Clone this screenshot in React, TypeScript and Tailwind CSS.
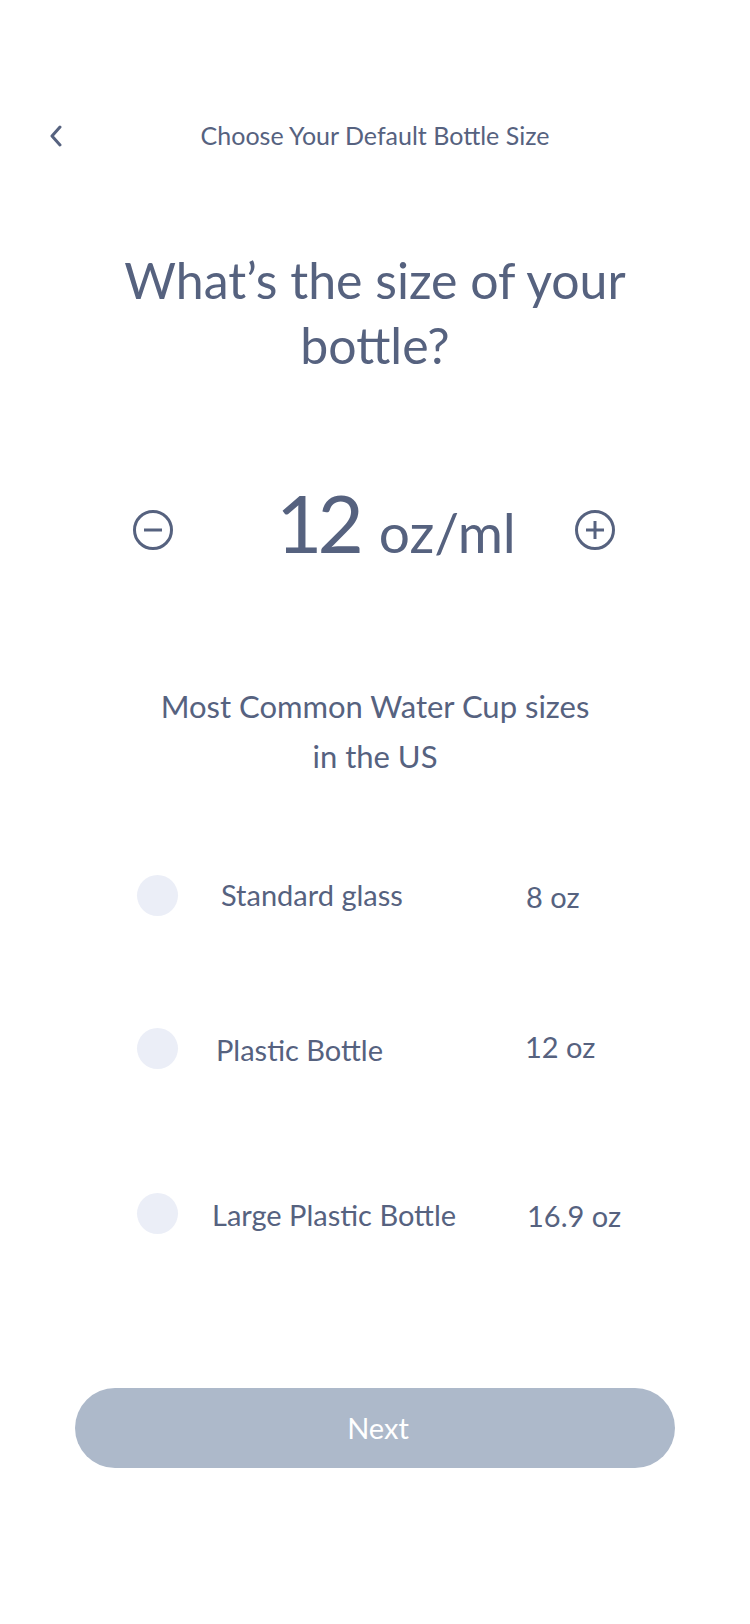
import React from "react";

const options = [
  { label: "Standard glass", value: "8 oz", row: "mt-[84px]", text: "ml-[43px]", val: "left-[526px] top-[12px]" },
  { label: "Plastic Bottle", value: "12 oz", row: "mt-[93px]", text: "ml-[38px] mt-[2px]", val: "left-[525px] top-[9px]" },
  { label: "Large Plastic Bottle", value: "16.9 oz", row: "mt-[105px]", text: "ml-[34px] mt-[2px]", val: "left-[527px] top-[13px]" },
];

const MinusIcon = () => (
  <svg width="42" height="42" viewBox="0 0 42 42" fill="none" stroke="#56627f" strokeWidth="3">
    <circle cx="21" cy="21" r="18.5" />
    <line x1="12" y1="21" x2="30" y2="21" />
  </svg>
);

const PlusIcon = () => (
  <svg width="42" height="42" viewBox="0 0 42 42" fill="none" stroke="#56627f" strokeWidth="3">
    <circle cx="21" cy="21" r="18.5" />
    <line x1="12" y1="21" x2="30" y2="21" />
    <line x1="21" y1="12" x2="21" y2="30" />
  </svg>
);

export default function App() {
  return (
    <div className="w-[750px] h-[1624px] bg-white text-[#56627f] font-['Lato',sans-serif] flex flex-col">
      {/* Header */}
      <div className="mt-[112px] h-[48px] flex items-center">
        <svg className="ml-[50px]" width="12" height="22" viewBox="0 0 12 22" fill="none" stroke="#56627f" strokeWidth="3" strokeLinecap="round" strokeLinejoin="round">
          <path d="M10 2 L2 11 L10 20" />
        </svg>
        <div className="flex-1 text-center text-[25px] pr-[62px]">Choose Your Default Bottle Size</div>
      </div>

      {/* Heading */}
      <h1 className="mt-[88px] text-center text-[50px] leading-[65px] px-[110px]">
        What’s the size of your bottle?
      </h1>

      {/* Stepper */}
      <div className="mt-[102px] h-[100px] flex items-center">
        <div className="ml-[132px]">
          <MinusIcon />
        </div>
        <div className="ml-[102px] w-[300px] flex items-baseline -mt-[16px]">
          <span className="text-[80px] leading-none tracking-[-5px]">12</span>
          <span className="ml-[20px] text-[55px] leading-none">oz/ml</span>
        </div>
        <div className="ml-[-2px]">
          <PlusIcon />
        </div>
      </div>

      {/* Subtitle */}
      <p className="mt-[101px] text-center text-[31px] leading-[50px]">
        Most Common Water Cup sizes
        <br />
        in the US
      </p>

      {/* Options */}
      {options.map((o) => (
        <div key={o.label} className={`${o.row} h-[60px] flex items-start relative`}>
          <div className="ml-[137px] mt-[10px] w-[41px] h-[41px] rounded-full bg-[#ebeef7]" />
          <span className={`${o.text} text-[29px] leading-[60px]`}>{o.label}</span>
          <span className={`absolute ${o.val} text-[29px] leading-[40px]`}>{o.value}</span>
        </div>
      ))}

      {/* Next */}
      <button className="mt-[145px] mx-auto w-[600px] h-[80px] rounded-full bg-[#adb9ca] text-white text-[29px] pl-[6px]">
        Next
      </button>
    </div>
  );
}
